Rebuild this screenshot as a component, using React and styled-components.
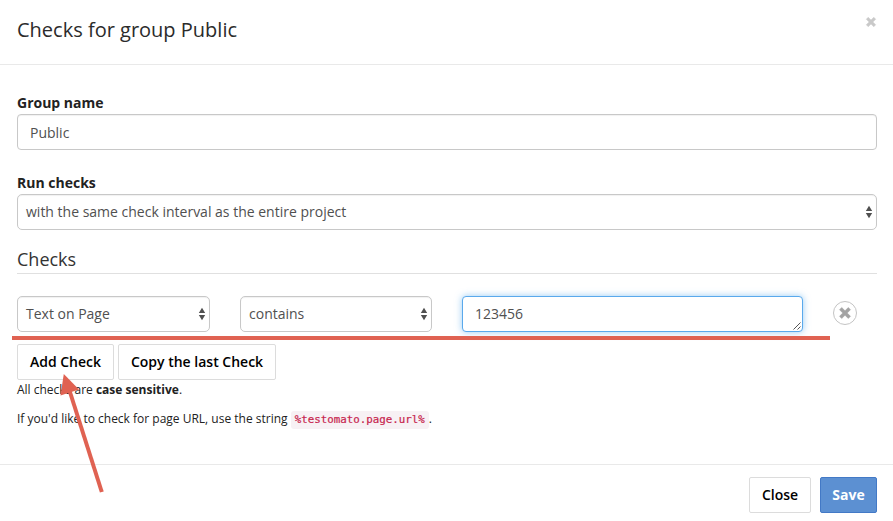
import React from "react";
import styled, { createGlobalStyle } from "styled-components";

const GlobalStyle = createGlobalStyle`
  *, *::before, *::after { box-sizing: border-box; }
  body {
    margin: 0;
    background: #fff;
    color: #222;
    font: 14px/20px "Open Sans", sans-serif;
    overflow: hidden;
  }
`;

const Dialog = styled.div`
  position: relative;
  display: flex;
  flex-direction: column;
  width: 893px;
  height: 521px;
  background: #fff;
`;

const Header = styled.header`
  display: flex;
  justify-content: space-between;
  align-items: flex-start;
  height: 65px;
  padding: 15px 16px 0 17px;
  border-bottom: 1px solid #e9e9e9;
`;

const Title = styled.h1`
  margin: 0;
  font-size: 20px;
  font-weight: 400;
  line-height: 30px;
  color: #2b2b2b;
`;

const Dismiss = styled.button`
  display: flex;
  margin-top: 1px;
  padding: 0;
  border: 0;
  background: none;
  color: #c9c9c9;
`;

const Body = styled.main`
  flex: 1;
  padding: 28px 16px 0 17px;
`;

const Field = styled.div`
  display: flex;
  flex-direction: column;
  gap: 1px;
  margin-bottom: 23px;
`;

const Label = styled.label`
  font-size: 14px;
  font-weight: 700;
  line-height: 20px;
`;

const Control = styled.div`
  display: flex;
  align-items: center;
  justify-content: space-between;
  height: 36px;
  padding: ${(p) => (p.$select ? "0 3px 0 8px" : p.$focused ? "0 12px" : "2px 12px 0")};
  border: 1px solid ${(p) => (p.$focused ? "#5aa9ec" : "#c8c8c8")};
  border-radius: ${(p) => (p.$select ? "5px" : "4px")};
  box-shadow: ${(p) =>
    p.$focused
      ? "0 0 7px rgba(82, 168, 236, 0.6)"
      : "inset 0 1px 1px rgba(0, 0, 0, 0.06)"};
  background: #fff;
  color: #505050;
  line-height: 20px;
`;

const Section = styled.h2`
  height: 25px;
  margin: -4px 0 22px;
  border-bottom: 1px solid #e0e0e0;
  font-size: 18px;
  font-weight: 400;
  line-height: 20px;
  color: #333;
`;

const CheckRow = styled.div`
  display: grid;
  grid-template-columns: 193px 192px 341px 24px;
  column-gap: 30px;
  align-items: center;
`;

const TextArea = styled(Control)`
  position: relative;
`;

const Grip = styled.svg`
  position: absolute;
  right: 0;
  bottom: 0;
`;

const Remove = styled.button`
  display: flex;
  align-items: center;
  justify-content: center;
  width: 24px;
  height: 24px;
  margin-top: -2px;
  padding: 0;
  border: 1px solid #c4c4c4;
  border-radius: 50%;
  background: #fff;
  color: #a3a3a3;
`;

const Actions = styled.div`
  display: flex;
  gap: 4px;
  margin-top: 12px;
`;

const Button = styled.button`
  height: 36px;
  width: ${(p) => p.$width}px;
  padding: 0;
  border: 1px solid ${(p) => (p.$primary ? "#4379c6" : "#dcdcdc")};
  border-radius: 2px;
  background: ${(p) => (p.$primary ? "#5c90d2" : "#fff")};
  color: ${(p) => (p.$primary ? "#fff" : "#000")};
  font: ${(p) => (p.$primary ? 700 : 600)} 14px/20px "Open Sans", sans-serif;
  white-space: nowrap;
`;

const Help = styled.p`
  margin: 0 0 9px;
  font-size: 12px;
  line-height: 20px;
`;

const Code = styled.code`
  padding: 2px 4px 3px;
  border-radius: 3px;
  background: #f7f1f4;
  color: #c7254e;
  font: 10.8px "DejaVu Sans Mono", monospace;
  -webkit-text-stroke: 0.2px #c7254e;
`;

const Footer = styled.footer`
  display: flex;
  justify-content: flex-end;
  gap: 9px;
  height: 57px;
  padding: 12px 16px 0;
  border-top: 1px solid #e9e9e9;
`;

const Annotation = styled.svg`
  position: absolute;
  inset: 0;
  pointer-events: none;
`;

const Cross = ({ size }) => (
  <svg width={size} height={size} viewBox="0 0 12 12" aria-hidden="true">
    <path
      d="M3.2 1.3L6 4.1L8.8 1.3L10.7 3.2L7.9 6L10.7 8.8L8.8 10.7L6 7.9L3.2 10.7L1.3 8.8L4.1 6L1.3 3.2Z"
      fill="currentColor"
      stroke="currentColor"
      strokeWidth="0.5"
      strokeLinejoin="round"
    />
  </svg>
);

const Stepper = () => (
  <svg width="8" height="14" viewBox="0 0 8 14" aria-hidden="true">
    <path d="M4 0.8L7.2 6H0.8ZM0.8 8H7.2L4 13.2Z" fill="#505050" />
  </svg>
);

const Select = ({ children }) => (
  <Control $select>
    <span>{children}</span>
    <Stepper />
  </Control>
);

export default function App() {
  return (
    <>
      <GlobalStyle />
      <Dialog>
        <Header>
          <Title>Checks for group Public</Title>
          <Dismiss aria-label="Close dialog">
            <Cross size={12} />
          </Dismiss>
        </Header>
        <Body>
          <Field>
            <Label>Group name</Label>
            <Control>Public</Control>
          </Field>
          <Field>
            <Label>Run checks</Label>
            <Select>with the same check interval as the entire project</Select>
          </Field>
          <Section>Checks</Section>
          <CheckRow>
            <Select>Text on Page</Select>
            <Select>contains</Select>
            <TextArea $focused>
              123456
              <Grip width="10" height="10" viewBox="0 0 10 10">
                <path d="M1.5 8.5L8.5 1.5M5.5 8.5L8.5 5.5" stroke="#555" fill="none" />
              </Grip>
            </TextArea>
            <Remove aria-label="Remove check">
              <Cross size={14} />
            </Remove>
          </CheckRow>
          <Actions>
            <Button $width={97}>Add Check</Button>
            <Button $width={158}>Copy the last Check</Button>
          </Actions>
          <Help>
            All checks are <strong>case sensitive</strong>.
          </Help>
          <Help>
            If you'd like to check for page URL, use the string <Code>%testomato.page.url%</Code>.
          </Help>
        </Body>
        <Footer>
          <Button $width={62}>Close</Button>
          <Button $width={57} $primary>
            Save
          </Button>
        </Footer>
        <Annotation width="893" height="521" viewBox="0 0 893 521">
          <path d="M12 338H830" stroke="#e06252" strokeWidth="4" />
          <path d="M101.8 492L69 389" stroke="#e06252" strokeWidth="4" />
          <path d="M63.8 374L79 389.5L60.5 395.5Z" fill="#e06252" />
        </Annotation>
      </Dialog>
    </>
  );
}
